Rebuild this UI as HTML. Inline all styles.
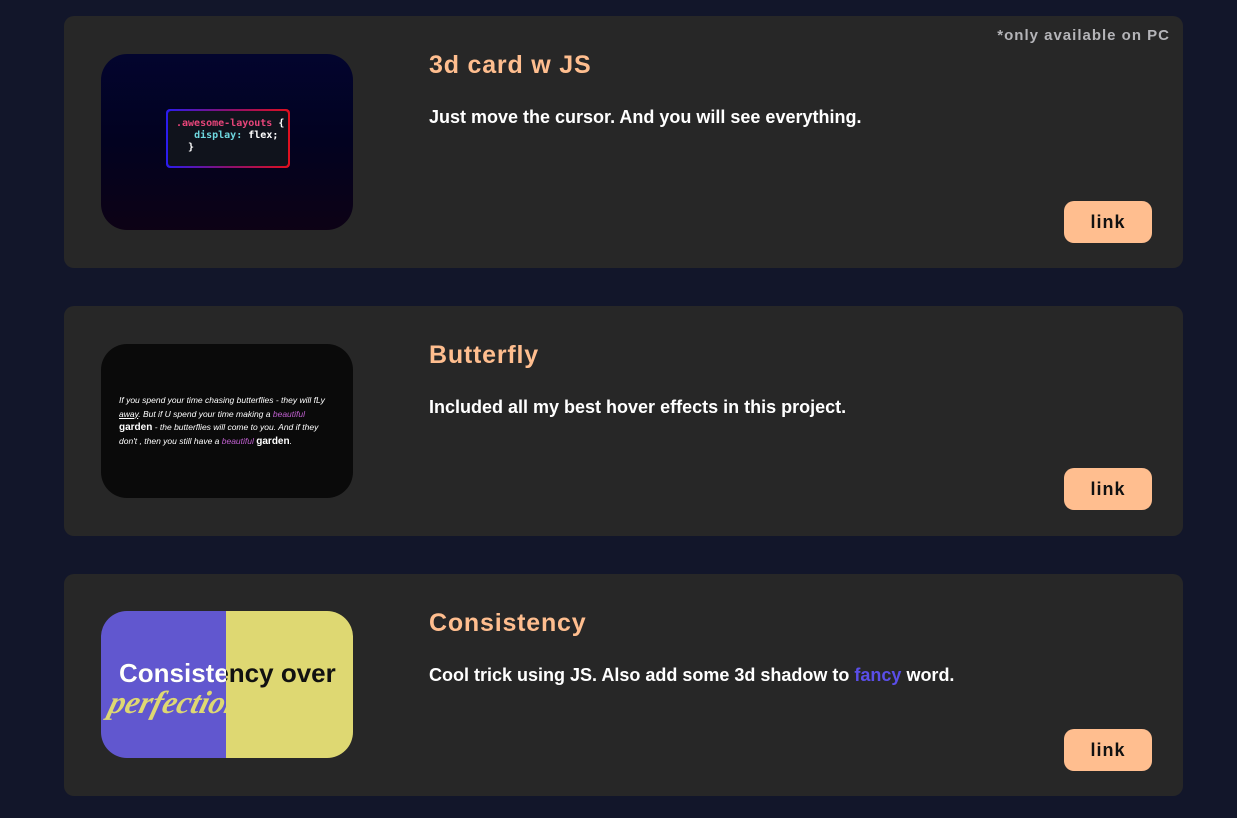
<!DOCTYPE html>
<html><head><meta charset="utf-8"><style>
*{margin:0;padding:0;box-sizing:border-box}
body{width:1237px;height:818px;background:#12162a;font-family:"Liberation Sans",sans-serif;position:relative;overflow:hidden}
.card{position:absolute;left:64px;width:1119px;background:#272727;border-radius:10px}
.img{position:absolute;left:37px;width:252px;border-radius:26px;overflow:hidden}
.t{position:absolute;left:365px;color:#ffbe8f;font-weight:900;font-size:25px;letter-spacing:0.8px}
.d{position:absolute;left:365px;color:#fff;font-weight:bold;font-size:18px}
.btn{position:absolute;left:1000px;width:88px;height:42px;background:#ffbe8f;border-radius:10px;color:#111;font-weight:bold;font-size:18px;text-align:center;line-height:42px;letter-spacing:1px}
</style></head><body>
<div class="card" style="top:16px;height:252px">
 <div style="position:absolute;right:13px;top:11px;color:#b4b4b8;font-weight:bold;font-size:15px;letter-spacing:1px">*only available on PC</div>
 <div class="img" style="top:38px;height:176px;background:linear-gradient(180deg,#03052e 0%,#020220 50%,#0d0215 100%)">
  <div style="position:absolute;left:65px;top:55px;width:124px;height:59px;border-radius:4px;padding:2px;background:linear-gradient(90deg,#2a1cf0,#8a1070,#e0101e)">
   <div style="width:100%;height:100%;background:#10131c;border-radius:3px;font-family:'DejaVu Sans Mono',monospace;font-size:10px;font-weight:bold;line-height:12px;padding:7px 0 0 8px;color:#fff;white-space:nowrap">
    <span style="color:#e8457a">.awesome-layouts</span> {<br>&nbsp;&nbsp;&nbsp;<span style="color:#6fd8e0">display:</span> flex;<br>&nbsp;&nbsp;}
   </div>
  </div>
 </div>
 <div class="t" style="top:35px">3d card w JS</div>
 <div class="d" style="top:91px">Just move the cursor. And you will see everything.</div>
 <div class="btn" style="top:185px">link</div>
</div>
<div class="card" style="top:306px;height:230px">
 <div class="img" style="top:38px;height:154px;background:#0a0a0a">
  <div style="position:absolute;left:18px;top:50px;width:216px;color:#fff;font-size:8.5px;line-height:13.5px;font-style:italic;font-family:'Liberation Sans',sans-serif">If you spend your time chasing butterflies - they will fLy <u>away</u>. But if U spend your time making a <span style="color:#c060d0">beautiful</span> <b style="font-style:normal;font-size:10px">garden</b> - the butterflies will come to you. And if they don't , then you still have a <span style="color:#c060d0">beautiful</span> <b style="font-style:normal;font-size:10px">garden</b>.</div>
 </div>
 <div class="t" style="top:35px">Butterfly</div>
 <div class="d" style="top:91px">Included all my best hover effects in this project.</div>
 <div class="btn" style="top:162px">link</div>
</div>
<div class="card" style="top:574px;height:222px">
 <div class="img" style="top:37px;height:147px;background:linear-gradient(90deg,#6157cf 0,#6157cf 125px,#ded872 125px)">
  <div style="position:absolute;left:18px;top:47px;font-size:26px;font-weight:bold;white-space:nowrap;color:#111">Consistency over</div>
  <div style="position:absolute;left:0;top:0;width:125px;height:147px;overflow:hidden">
   <div style="position:absolute;left:18px;top:47px;font-size:26px;font-weight:bold;white-space:nowrap;color:#fff">Consistency over</div>
   <div style="position:absolute;left:9px;top:73px;font-family:'Liberation Serif',serif;font-style:italic;font-size:32px;font-weight:bold;color:#ded872;transform:skew(-15deg);white-space:nowrap">perfection</div>
  </div>
 </div>
 <div class="t" style="top:35px">Consistency</div>
 <div class="d" style="top:91px">Cool trick using JS. Also add some 3d shadow to <span style="color:#5a4ee8">fancy</span> word.</div>
 <div class="btn" style="top:155px">link</div>
</div>
</body></html>
